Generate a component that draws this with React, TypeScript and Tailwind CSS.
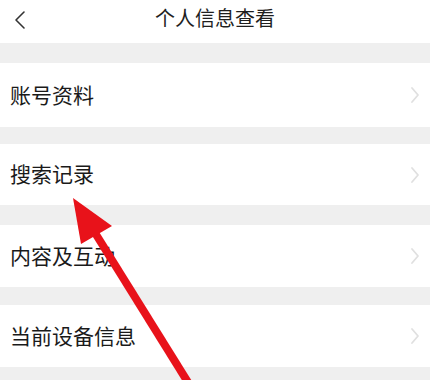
import React from 'react';

const rows = [
  { label: '账号资料', h: 'h-[64px]', gap: 'h-[17px]' },
  { label: '搜索记录', h: 'h-[61px]', gap: 'h-[20px]' },
  { label: '内容及互动', h: 'h-[62px]', gap: 'h-[18px]' },
  { label: '当前设备信息', h: 'h-[62px]', gap: 'h-[13px]' },
];

const Chevron = () => (
  <svg width="10" height="18" viewBox="0 0 10 18" fill="none">
    <path d="M2 2l6 7-6 7" stroke="#e0e0e0" strokeWidth="1.8" strokeLinecap="round" strokeLinejoin="round" />
  </svg>
);

const App: React.FC = () => {
  return (
    <div
      className="relative w-[430px] h-[380px] overflow-hidden bg-[#efefef] text-[#1a1a1a]"
      style={{ fontFamily: '"Noto Sans CJK SC", "Noto Sans", sans-serif' }}
    >
      {/* Header */}
      <div className="relative h-[43px] bg-white flex items-center justify-center">
        <button className="absolute left-[10px] top-[6px] p-1">
          <svg width="12" height="20" viewBox="0 0 12 20" fill="none">
            <path d="M10 2L2 10l8 8" stroke="#333" strokeWidth="1.6" strokeLinecap="round" strokeLinejoin="round" />
          </svg>
        </button>
        <h1 className="text-[20px] leading-none font-normal text-[#1f1f1f] -mt-[8px]">个人信息查看</h1>
      </div>
      <div className="h-[20px]" />

      {rows.map((r) => (
        <React.Fragment key={r.label}>
          <div className={`${r.h} bg-white flex items-center justify-between pl-[10px] pr-[10px]`}>
            <span className="text-[21px] leading-none -mt-[2px]">{r.label}</span>
            <Chevron />
          </div>
          <div className={r.gap} />
        </React.Fragment>
      ))}

      {/* Red annotation arrow */}
      <svg className="absolute inset-0 pointer-events-none" width="430" height="380" viewBox="0 0 430 380">
        <line x1="92" y1="228" x2="194" y2="392" stroke="#e8121a" strokeWidth="8" />
        <polygon points="73,198 112,226 81,244" fill="#e8121a" />
      </svg>
    </div>
  );
};

export default App;
